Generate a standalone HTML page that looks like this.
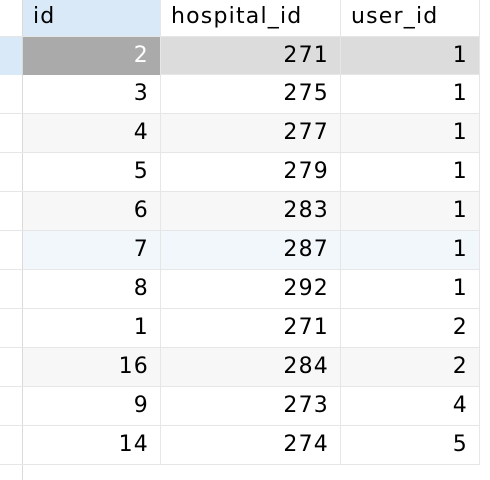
<!DOCTYPE html>
<html><head><style>
body{margin:0;width:490px;height:480px;background:#fff;position:relative;overflow:hidden;font-family:"DejaVu Sans",sans-serif;font-size:22px;letter-spacing:1.2px;color:#000}
.r{position:absolute;left:0;width:480px;height:39px;box-sizing:border-box;border-bottom:1px solid #e6e6e6}
.c{position:absolute;top:0;height:38px;line-height:38px;box-sizing:border-box;border-right:1px solid #e6e6e6;text-align:right;padding-right:11px}
.c0{left:0;width:23px;border-right:1px solid #dadada}
.c1{left:23px;width:138px}
.c2{left:161px;width:180px}
.c3{left:341px;width:139px}
.h .c{text-align:left;padding-left:10px;height:36px;line-height:34px}
</style></head><body>
<div class="r h" style="top:0;height:37px">
<div class="c c0"></div>
<div class="c c1" style="background:#d9e9f7">id</div>
<div class="c c2">hospital_id</div>
<div class="c c3">user_id</div>
</div>
<div class="r" style="top:37px;height:38px;background:#dcdcdc"><div class="c c0" style="background:#d9e9f7"></div><div class="c c1" style="background:#aaaaaa;color:#fff">2</div><div class="c c2">271</div><div class="c c3">1</div></div>
<div class="r" style="top:75px"><div class="c c0"></div><div class="c c1">3</div><div class="c c2">275</div><div class="c c3">1</div></div>
<div class="r" style="top:114px;background:#f7f7f7"><div class="c c0" style="background:#fff"></div><div class="c c1">4</div><div class="c c2">277</div><div class="c c3">1</div></div>
<div class="r" style="top:153px"><div class="c c0"></div><div class="c c1">5</div><div class="c c2">279</div><div class="c c3">1</div></div>
<div class="r" style="top:192px;background:#f7f7f7"><div class="c c0" style="background:#fff"></div><div class="c c1">6</div><div class="c c2">283</div><div class="c c3">1</div></div>
<div class="r" style="top:231px;background:#f2f7fc"><div class="c c0" style="background:#fff"></div><div class="c c1">7</div><div class="c c2">287</div><div class="c c3">1</div></div>
<div class="r" style="top:270px"><div class="c c0"></div><div class="c c1">8</div><div class="c c2">292</div><div class="c c3">1</div></div>
<div class="r" style="top:309px"><div class="c c0"></div><div class="c c1">1</div><div class="c c2">271</div><div class="c c3">2</div></div>
<div class="r" style="top:348px;background:#f7f7f7"><div class="c c0" style="background:#fff"></div><div class="c c1">16</div><div class="c c2">284</div><div class="c c3">2</div></div>
<div class="r" style="top:387px"><div class="c c0"></div><div class="c c1">9</div><div class="c c2">273</div><div class="c c3">4</div></div>
<div class="r" style="top:426px"><div class="c c0"></div><div class="c c1">14</div><div class="c c2">274</div><div class="c c3">5</div></div>
<div style="position:absolute;left:0;top:465px;width:23px;height:15px;border-right:1px solid #dadada;box-sizing:border-box"></div>
</body></html>
